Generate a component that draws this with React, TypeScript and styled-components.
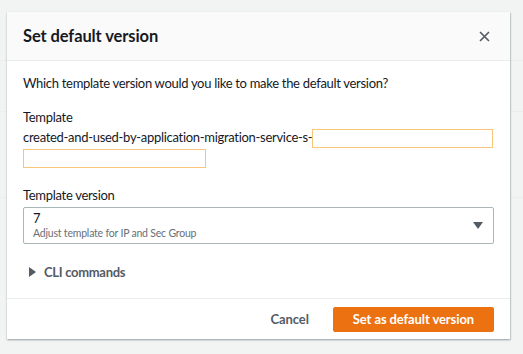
import React from 'react';
import styled, { createGlobalStyle } from 'styled-components';

const GlobalStyle = createGlobalStyle`
  html, body {
    margin: 0;
    padding: 0;
  }
  body {
    font-family: Lato, "Noto Sans", Arial, sans-serif;
    color: #16191f;
    background: #f2f3f3;
  }
`;

const Page = styled.div`
  position: relative;
  width: 523px;
  height: 354px;
  overflow: hidden;
  background: #f2f3f3;
`;

const Backdrop = styled.div`
  display: flex;
  flex-direction: column;
`;

const BackdropRow = styled.div<{ $height: number }>`
  height: ${(p) => p.$height}px;
  border-bottom: 1px solid #e4e8e8;
`;

const Overlay = styled.div`
  position: absolute;
  inset: 0;
  padding: 12px 13px 15px 7px;
  background: rgba(242, 243, 243, 0.55);
`;

const Modal = styled.div`
  display: flex;
  flex-direction: column;
  height: 100%;
  background: #fff;
  box-shadow: 0 1px 2px rgba(0, 28, 36, 0.3), 1px 1px 1px rgba(0, 28, 36, 0.1);
`;

const Header = styled.div`
  display: flex;
  align-items: center;
  justify-content: space-between;
  height: 48px;
  padding: 0 20px 0 16px;
  background: #fafafa;
  border-bottom: 1px solid #eaeded;
`;

const Title = styled.h2`
  margin: 0;
  font-size: 16.5px;
  font-weight: 700;
  letter-spacing: -0.1px;
`;

const CloseButton = styled.button`
  display: flex;
  padding: 0;
  border: 0;
  background: none;
  color: #545b64;
  cursor: pointer;
`;

const Body = styled.div`
  flex: 1;
  padding: 13px 16px 0;
  font-size: 13px;
  letter-spacing: -0.3px;
`;

const Prompt = styled.p`
  margin: 0 0 15px;
  line-height: 19px;
`;

const Field = styled.div`
  margin-bottom: 18px;
`;

const Label = styled.div`
  line-height: 19px;
  margin-bottom: 1px;
`;

const TemplateName = styled.div`
  line-height: 19px;
`;

const Redaction = styled.span<{ $width: number }>`
  display: inline-block;
  width: ${(p) => p.$width}px;
  height: 19px;
  vertical-align: middle;
  border: 1px solid #f9c57c;
  box-sizing: border-box;
`;

const Select = styled.div`
  display: flex;
  align-items: center;
  justify-content: space-between;
  height: 37px;
  margin-top: 2px;
  box-sizing: border-box;
  padding: 0 10px 0 9px;
  border: 1px solid #aab7b8;
  border-radius: 2px;
`;

const SelectValue = styled.div`
  display: flex;
  flex-direction: column;
`;

const OptionLabel = styled.span`
  font-size: 13px;
  line-height: 16px;
`;

const OptionDescription = styled.span`
  font-size: 10.5px;
  line-height: 15px;
  letter-spacing: -0.2px;
  color: #687078;
`;

const Expander = styled.div`
  display: flex;
  align-items: center;
  gap: 8px;
  margin: 20px 0 0 6px;
  font-weight: 700;
  color: #545b64;
`;

const Footer = styled.div`
  display: flex;
  justify-content: flex-end;
  align-items: center;
  gap: 24px;
  height: 40px;
  padding: 0 16px 0 0;
  border-top: 1px solid #eaeded;
`;

const LinkButton = styled.button`
  padding: 0;
  border: 0;
  background: none;
  font: inherit;
  font-size: 13px;
  font-weight: 700;
  letter-spacing: -0.1px;
  color: #545b64;
`;

const PrimaryButton = styled.button`
  height: 25px;
  padding: 0 19px;
  border: 1px solid #ec7211;
  border-radius: 2px;
  background: #ec7211;
  color: #fff;
  font: inherit;
  font-size: 13px;
  font-weight: 700;
  letter-spacing: -0.1px;
`;

const CloseIcon = () => (
  <svg width="11" height="11" viewBox="0 0 16 16" fill="none" stroke="currentColor" strokeWidth="2.4">
    <path d="M1.5 1.5l13 13M14.5 1.5l-13 13" />
  </svg>
);

const Caret = () => (
  <svg width="10" height="7" viewBox="0 0 10 7">
    <path d="M0 0h10L5 7z" fill="#545b64" />
  </svg>
);

const RightCaret = () => (
  <svg width="7" height="10" viewBox="0 0 7 10">
    <path d="M0 0l7 5-7 5z" fill="#545b64" />
  </svg>
);

const App: React.FC = () => {
  return (
    <Page>
      <GlobalStyle />
      <Backdrop>
        <BackdropRow $height={60} />
        <BackdropRow $height={50} />
        <BackdropRow $height={85} />
      </Backdrop>
      <Overlay>
        <Modal>
          <Header>
            <Title>Set default version</Title>
            <CloseButton aria-label="Close">
              <CloseIcon />
            </CloseButton>
          </Header>
          <Body>
            <Prompt>Which template version would you like to make the default version?</Prompt>
            <Field>
              <Label>Template</Label>
              <TemplateName>
                created-and-used-by-application-migration-service-s-
                <Redaction $width={181} />
                <br />
                <Redaction $width={183} />
              </TemplateName>
            </Field>
            <Field>
              <Label>Template version</Label>
              <Select>
                <SelectValue>
                  <OptionLabel>7</OptionLabel>
                  <OptionDescription>Adjust template for IP and Sec Group</OptionDescription>
                </SelectValue>
                <Caret />
              </Select>
            </Field>
            <Expander>
              <RightCaret />
              CLI commands
            </Expander>
          </Body>
          <Footer>
            <LinkButton>Cancel</LinkButton>
            <PrimaryButton>Set as default version</PrimaryButton>
          </Footer>
        </Modal>
      </Overlay>
    </Page>
  );
};

export default App;
